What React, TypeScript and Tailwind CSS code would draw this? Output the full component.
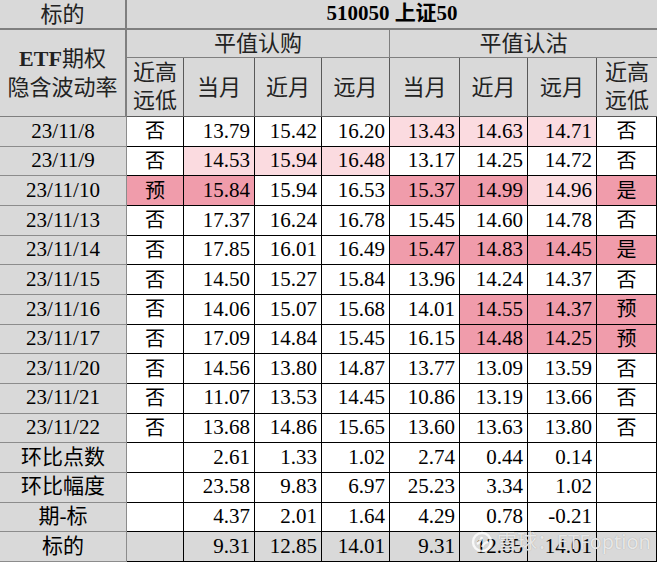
import React from 'react';

type Tone = '' | 'l' | 'd';

interface Row {
  date: string;
  flagC: string;
  toneFC: Tone;
  calls: [string, Tone][];
  puts: [string, Tone][];
  flagP: string;
  toneFP: Tone;
}

const rows: Row[] = [
  { date: '23/11/8', flagC: '否', toneFC: '', calls: [['13.79', ''], ['15.42', ''], ['16.20', '']], puts: [['13.43', 'l'], ['14.63', 'l'], ['14.71', 'l']], flagP: '否', toneFP: '' },
  { date: '23/11/9', flagC: '否', toneFC: '', calls: [['14.53', 'l'], ['15.94', 'l'], ['16.48', 'l']], puts: [['13.17', ''], ['14.25', ''], ['14.72', '']], flagP: '否', toneFP: '' },
  { date: '23/11/10', flagC: '预', toneFC: 'd', calls: [['15.84', 'd'], ['15.94', ''], ['16.53', '']], puts: [['15.37', 'd'], ['14.99', 'd'], ['14.96', 'l']], flagP: '是', toneFP: 'd' },
  { date: '23/11/13', flagC: '否', toneFC: '', calls: [['17.37', ''], ['16.24', ''], ['16.78', '']], puts: [['15.45', ''], ['14.60', ''], ['14.78', '']], flagP: '否', toneFP: '' },
  { date: '23/11/14', flagC: '否', toneFC: '', calls: [['17.85', ''], ['16.01', ''], ['16.49', '']], puts: [['15.47', 'd'], ['14.83', 'd'], ['14.45', 'd']], flagP: '是', toneFP: 'd' },
  { date: '23/11/15', flagC: '否', toneFC: '', calls: [['14.50', ''], ['15.27', ''], ['15.84', '']], puts: [['13.96', ''], ['14.24', ''], ['14.37', '']], flagP: '否', toneFP: '' },
  { date: '23/11/16', flagC: '否', toneFC: '', calls: [['14.06', ''], ['15.07', ''], ['15.68', '']], puts: [['14.01', ''], ['14.55', 'd'], ['14.37', 'd']], flagP: '预', toneFP: 'd' },
  { date: '23/11/17', flagC: '否', toneFC: '', calls: [['17.09', ''], ['14.84', ''], ['15.45', '']], puts: [['16.15', ''], ['14.48', 'd'], ['14.25', 'd']], flagP: '预', toneFP: 'd' },
  { date: '23/11/20', flagC: '否', toneFC: '', calls: [['14.56', ''], ['13.80', ''], ['14.87', '']], puts: [['13.77', ''], ['13.09', ''], ['13.59', '']], flagP: '否', toneFP: '' },
  { date: '23/11/21', flagC: '否', toneFC: '', calls: [['11.07', ''], ['13.53', ''], ['14.45', '']], puts: [['10.86', ''], ['13.19', ''], ['13.66', '']], flagP: '否', toneFP: '' },
  { date: '23/11/22', flagC: '否', toneFC: '', calls: [['13.68', ''], ['14.86', ''], ['15.65', '']], puts: [['13.60', ''], ['13.63', ''], ['13.80', '']], flagP: '否', toneFP: '' },
];

const stats = [
  { label: '环比点数', vals: ['2.61', '1.33', '1.02', '2.74', '0.44', '0.14'] },
  { label: '环比幅度', vals: ['23.58', '9.83', '6.97', '25.23', '3.34', '1.02'] },
  { label: '期-标', vals: ['4.37', '2.01', '1.64', '4.29', '0.78', '-0.21'] },
];

const under = ['9.31', '12.85', '14.01', '9.31', '12.85', '14.01'];

function toneBg(t: Tone) {
  if (t === 'd') return 'bg-[#f09cab]';
  if (t === 'l') return 'bg-[#fbdbe0]';
  return 'bg-white';
}

function Num({ v, t, gray }: { v: string; t?: Tone; gray?: boolean }) {
  return (
    <div className={`flex items-center justify-end pr-[4px] border-r border-b border-black text-[21px] ${gray ? 'bg-[#d9d9d9]' : toneBg(t || '')}`}>
      {v}
    </div>
  );
}

function Flag({ v, t }: { v: string; t: Tone }) {
  return (
    <div className={`flex items-center justify-center border-r border-b border-black text-[20px] ${toneBg(t)}`}>
      {v}
    </div>
  );
}

function Label({ v }: { v: string }) {
  return (
    <div className="flex items-center justify-center border-r border-b border-[#8c8c8c] bg-[#d9d9d9] text-[21px]">
      {v}
    </div>
  );
}

export default function App() {
  return (
    <div
      className="relative w-[657px] h-[562px] overflow-hidden bg-white text-black"
      style={{ fontFamily: '"Liberation Serif", "Noto Sans CJK SC", serif' }}
    >
      <div className="grid w-[657px] grid-cols-[127px_57px_71px_67px_68px_70px_68px_69px_60px] grid-rows-[30px_28px_59px_repeat(15,29.67px)]">
        {/* header */}
        <div className="flex items-center justify-center bg-[#d9d9d9] border-r-2 border-b-2 border-[#7f7f7f] text-[22px] text-[#222]">标的</div>
        <div className="col-span-8 flex items-center justify-center bg-[#d9d9d9] border-b-2 border-[#7f7f7f] text-[21px] font-bold">
          510050 上证50
        </div>

        <div className="row-span-2 flex flex-col items-center justify-center bg-[#d9d9d9] border-r-2 border-b border-[#7f7f7f] text-[22px] leading-[29px] text-[#222]">
          <div><span className="font-bold">ETF</span>期权</div>
          <div>隐含波动率</div>
        </div>
        <div className="col-span-4 flex items-center justify-center bg-[#d9d9d9] border-r border-b border-[#7f7f7f] text-[22px] text-[#222]">平值认购</div>
        <div className="col-span-4 flex items-center justify-center bg-[#d9d9d9] border-b border-[#7f7f7f] text-[22px] text-[#222]">平值认沽</div>

        {['近高远低', '当月', '近月', '远月', '当月', '近月', '远月', '近高远低'].map((h, i) => (
          <div
            key={i}
            className={`flex items-center justify-center bg-[#d9d9d9] border-b border-[#595959] text-[22px] text-[#222] ${i < 7 ? 'border-r' : ''} ${h.length > 2 ? 'flex-col leading-[28px]' : ''}`}
          >
            {h.length > 2 ? (
              <>
                <span>{h.slice(0, 2)}</span>
                <span>{h.slice(2)}</span>
              </>
            ) : (
              h
            )}
          </div>
        ))}

        {/* body */}
        {rows.map((r) => (
          <React.Fragment key={r.date}>
            <Label v={r.date} />
            <Flag v={r.flagC} t={r.toneFC} />
            {r.calls.map(([v, t], i) => (
              <Num key={'c' + i} v={v} t={t} />
            ))}
            {r.puts.map(([v, t], i) => (
              <Num key={'p' + i} v={v} t={t} />
            ))}
            <Flag v={r.flagP} t={r.toneFP} />
          </React.Fragment>
        ))}

        {stats.map((s) => (
          <React.Fragment key={s.label}>
            <Label v={s.label} />
            <div className="border-r border-b border-black bg-white" />
            {s.vals.map((v, i) => (
              <Num key={i} v={v} />
            ))}
            <div className="border-r border-b border-black bg-white" />
          </React.Fragment>
        ))}

        <Label v="标的" />
        <div className="border-r border-b border-black bg-[#d9d9d9]" />
        {under.map((v, i) => (
          <Num key={i} v={v} gray />
        ))}
        <div className="border-r border-b border-black bg-[#d9d9d9]" />
      </div>

      {/* watermark */}
      <div
        className="absolute left-[470px] top-[529px] flex items-center gap-[3px] whitespace-nowrap text-[20px] leading-[26px] text-white/75"
        style={{ fontFamily: '"Noto Sans", "Noto Sans CJK SC", sans-serif', textShadow: '0 0 1px #9a9a9a' }}
      >
        <svg width="24" height="24" viewBox="0 0 24 24" fill="none" stroke="white" strokeOpacity="0.8" strokeWidth="2.4">
          <circle cx="12" cy="12" r="9" />
          <path d="M7 14c2-1 4-4 5-7M12 17c1-3 4-5 6-5" />
        </svg>
        <span>雪球：ETFoption</span>
      </div>
    </div>
  );
}
